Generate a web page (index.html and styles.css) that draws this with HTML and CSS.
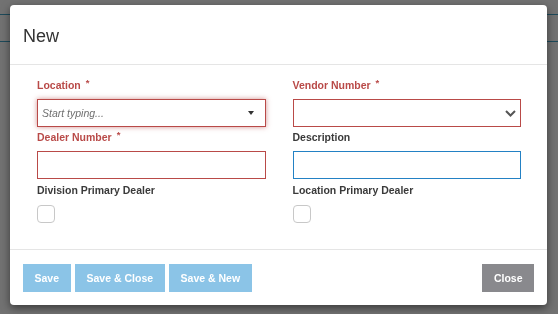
FILE: index.html
```html
<!DOCTYPE html>
<html>
<head>
<meta charset="utf-8">
<link rel="stylesheet" href="styles.css">
</head>
<body>
<div class="page">
  <div class="topbar"></div>
</div>
<div class="modal">
  <div class="modal-header">New</div>
  <div class="modal-body">
    <div class="field">
      <label class="lbl err">Location <span class="req">*</span></label>
      <div class="ctrl err focus-err combo">
        <span class="ph">Start typing...</span>
        <span class="caret"></span>
      </div>
    </div>
    <div class="field">
      <label class="lbl err">Vendor Number <span class="req">*</span></label>
      <div class="ctrl err select">
        <svg class="chev" width="11" height="7" viewBox="0 0 11 7"><polyline points="1,1 5.5,5.5 10,1" fill="none" stroke="#555" stroke-width="2"/></svg>
      </div>
    </div>
    <div class="field">
      <label class="lbl err">Dealer Number <span class="req">*</span></label>
      <div class="ctrl err"></div>
    </div>
    <div class="field">
      <label class="lbl">Description</label>
      <div class="ctrl focus"></div>
    </div>
    <div class="field last">
      <label class="lbl">Division Primary Dealer</label>
      <div class="check"></div>
    </div>
    <div class="field last">
      <label class="lbl">Location Primary Dealer</label>
      <div class="check"></div>
    </div>
  </div>
  <div class="modal-footer">
    <div class="btn-group">
      <button class="btn primary">Save</button>
      <button class="btn primary">Save &amp; Close</button>
      <button class="btn primary">Save &amp; New</button>
    </div>
    <button class="btn secondary">Close</button>
  </div>
</div>
</body>
</html>
```
FILE: styles.css
```css
html, body {
  margin: 0;
  padding: 0;
}
body {
  background: #727272;
  font-family: "Liberation Sans", Arial, sans-serif;
  width: 558px;
  height: 314px;
  overflow: hidden;
}
.page {
  padding-top: 14px;
}
.topbar {
  height: 26px;
  border-top: 1px solid #1d4a5a;
  border-bottom: 1px solid #1d4a5a;
}
.modal {
  position: fixed;
  left: 10px;
  top: 5px;
  width: 537px;
  height: 300px;
  background: #fff;
  border-radius: 4px;
  box-shadow: 0 3px 9px rgba(0, 0, 0, 0.5);
  display: flex;
  flex-direction: column;
  box-sizing: border-box;
}
.modal-header {
  padding: 18px 13px 15px;
  font-size: 18px;
  line-height: 26px;
  color: #333;
  border-bottom: 1px solid #e5e5e5;
}
.modal-body {
  flex: 1;
  padding: 12px 26px 0 27px;
  display: grid;
  grid-template-columns: 1fr 1fr;
  column-gap: 27px;
  row-gap: 2px;
  align-content: start;
}
.field {
  display: flex;
  flex-direction: column;
}
.field.last {
  margin-top: 1px;
}
.lbl {
  font-size: 10.5px;
  font-weight: bold;
  line-height: 17px;
  color: #3a3a3a;
  margin-bottom: 5px;
}
.lbl.err {
  color: #b94a48;
}
.req {
  font-size: 9.5px;
  vertical-align: top;
  position: relative;
  top: -3px;
  margin-left: 2px;
}
.ctrl {
  height: 28px;
  box-sizing: border-box;
  border: 1px solid #ccc;
  background: #fff;
  display: flex;
  align-items: center;
}
.ctrl.err {
  border-color: #b94a48;
}
.ctrl.focus-err {
  box-shadow: 0 0 5px rgba(206, 132, 131, 0.9);
}
.ctrl.focus {
  border-color: #2381c4;
}
.combo {
  padding: 0 11px 0 4px;
}
.ph {
  flex: 1;
  font-size: 10.5px;
  font-style: italic;
  color: #6f6f6f;
}
.caret {
  width: 0;
  height: 0;
  border-left: 3px solid transparent;
  border-right: 3px solid transparent;
  border-top: 4px solid #333;
}
.select {
  justify-content: flex-end;
  padding-right: 4px;
}
.chev {
  display: block;
}
.check {
  margin-top: 1px;
  width: 18px;
  height: 18px;
  box-sizing: border-box;
  border: 1px solid #c8c8c8;
  border-radius: 4px;
  background: #fff;
}
.modal-footer {
  border-top: 1px solid #e5e5e5;
  padding: 14px 13px 13px;
  display: flex;
  align-items: center;
}
.btn-group {
  display: flex;
  gap: 4.5px;
}
.btn {
  height: 28px;
  border: none;
  border-radius: 0;
  padding: 0 11.5px;
  font-family: "Liberation Sans", Arial, sans-serif;
  font-size: 10.5px;
  font-weight: bold;
  color: #fff;
  cursor: pointer;
}
.btn.primary {
  background: #8bc4e7;
}
.btn.secondary {
  background: #89898d;
  margin-left: auto;
}
```
